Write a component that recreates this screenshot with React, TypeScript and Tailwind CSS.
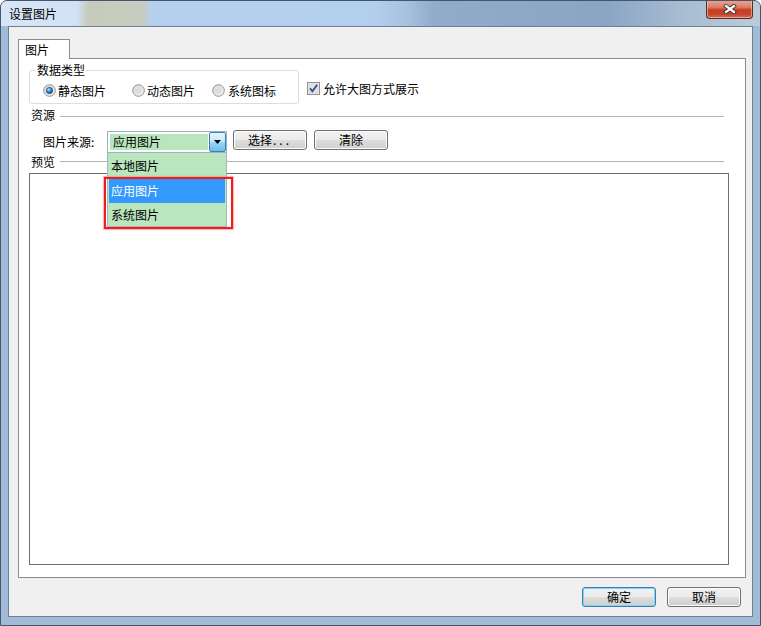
import React from "react";

function Radio({ checked }: { checked?: boolean }) {
  return (
    <svg width="13" height="13" viewBox="0 0 13 13" className="shrink-0">
      <defs>
        <linearGradient id={checked ? "rg1" : "rg0"} x1="0" y1="0" x2="1" y2="1">
          <stop offset="0" stopColor="#d8d8d8" />
          <stop offset="1" stopColor="#f8f8f8" />
        </linearGradient>
        <radialGradient id="dot" cx="0.4" cy="0.35" r="0.7">
          <stop offset="0" stopColor="#b9ecff" />
          <stop offset="0.5" stopColor="#2a8bd2" />
          <stop offset="1" stopColor="#0d3c74" />
        </radialGradient>
      </defs>
      <circle cx="6.5" cy="6.5" r="5.8" fill={checked ? "url(#rg1)" : "url(#rg0)"} stroke="#8e8f8f" strokeWidth="1" />
      {checked ? (
        <circle cx="6.5" cy="6.5" r="3.2" fill="url(#dot)" stroke="#1b4b7e" strokeWidth="0.6" />
      ) : (
        <circle cx="6.5" cy="6.5" r="3.6" fill="#dedede" />
      )}
    </svg>
  );
}

function Checkbox() {
  return (
    <svg width="13" height="13" viewBox="0 0 13 13" className="shrink-0">
      <rect x="0.5" y="0.5" width="12" height="12" fill="#f4f4f4" stroke="#8e8f8f" />
      <rect x="2" y="2" width="9" height="9" fill="#e4e4e4" stroke="#c4c4c4" strokeWidth="0.6" />
      <path d="M3 6.3 L5.4 9.2 L10.2 2.8" fill="none" stroke="#2e4a9c" strokeWidth="1.8" />
    </svg>
  );
}

function Btn({ children, def }: { children: React.ReactNode; def?: boolean }) {
  return (
    <div
      className={
        "w-[74px] h-[20px] rounded-[3px] border flex items-center justify-center bg-[linear-gradient(180deg,#f2f2f2_0%,#ebebeb_48%,#dddddd_52%,#cfcfcf_100%)] " +
        (def
          ? "border-[#3c7fb1] shadow-[inset_0_0_0_1px_#7fd3f7]"
          : "border-[#707070] shadow-[inset_0_0_0_1px_#fcfcfc]")
      }
    >
      {children}
    </div>
  );
}

export default function App() {
  return (
    <div className="w-[761px] h-[626px] relative overflow-hidden border border-[#43566c] rounded-t-[7px] bg-[#a1bad6] flex flex-col font-['Noto_Sans_CJK_SC','Noto_Sans',sans-serif] text-[12px] leading-[12px] text-black">
      {/* title bar */}
      <div className="h-[25px] shrink-0 flex items-center pl-[8px] bg-[linear-gradient(90deg,#d7e6f7_0%,#d2e1f3_10%,#c6cbbc_11.5%,#c7ccbe_18.5%,#b5d0ef_20%,#b3cfee_49%,#a9c3e0_53%,#91accb_57%,#8aa5c4_80%,#a8bdd2_90%,#bccbd9_100%)]">
        <span className="text-[12px] leading-[12px] text-black">设置图片</span>
      </div>
      {/* close button */}
      <div className="absolute top-[-1px] right-[7px] w-[47px] h-[19px] rounded-b-[4px] border border-[#5e2a22] border-t-0 bg-[linear-gradient(180deg,#e9a796_0%,#dc7d67_40%,#c63e24_55%,#c4452c_80%,#d7735c_100%)] flex items-center justify-center shadow-[inset_0_0_0_1px_rgba(255,220,210,0.5)]">
        <svg width="14" height="10" viewBox="0 0 14 10">
          <path d="M3 2 L11 8 M11 2 L3 8" stroke="#3a3030" strokeWidth="4" strokeLinecap="square" />
          <path d="M3 2 L11 8 M11 2 L3 8" stroke="#ffffff" strokeWidth="2.2" strokeLinecap="square" />
        </svg>
      </div>

      <div className="flex px-[7px]">
        {/* client */}
        <div className="w-[745px] h-[591px] border border-[#6d8097] bg-[#f0f0f0] flex flex-col">
          <div className="pt-[12px] pl-[9px] flex flex-col">
            {/* tab */}
            <div className="relative z-10 w-[52px] h-[20px] border border-b-0 border-[#898c95] bg-white mb-[-1px] flex items-center pl-[6px]">
              <span className="mt-[1px]">图片</span>
            </div>
            {/* panel */}
            <div className="w-[728px] h-[520px] border border-[#898c95] bg-white flex flex-col">
              {/* row 1 */}
              <div className="flex items-start pt-[11px] pl-[10px]">
                <div className="relative w-[270px] h-[34px] border border-[#d5dfe5] rounded-[3px] pl-[13px] pt-[13px] flex items-start">
                  <span className="absolute top-[-7px] left-[6px] px-[1px] bg-white">数据类型</span>
                  <div className="w-[89px] h-[13px] flex items-center gap-[2px]">
                    <Radio checked />
                    <span>静态图片</span>
                  </div>
                  <div className="w-[80px] h-[13px] flex items-center gap-[2px]">
                    <Radio />
                    <span>动态图片</span>
                  </div>
                  <div className="h-[13px] flex items-center gap-[3px]">
                    <Radio />
                    <span>系统图标</span>
                  </div>
                </div>
                <div className="ml-[8px] mt-[12px] h-[13px] flex items-center gap-[3px]">
                  <Checkbox />
                  <span>允许大图方式展示</span>
                </div>
              </div>
              {/* 资源 */}
              <div className="mt-[4px] h-[14px] flex items-center">
                <span className="ml-[12px]">资源</span>
                <div className="ml-[5px] mr-[21px] flex-1 h-px bg-[#b4b4b4] mt-[2px]" />
              </div>
              {/* 图片来源 */}
              <div className="mt-[9px] flex items-start">
                <div className="ml-[24px] w-[64px] h-[22px] flex items-center">图片来源:</div>
                <div className="relative z-20 w-[120px] h-[22px] border border-[#9ab3c9] bg-white flex">
                  <div className="flex-1 m-[1px] mr-0 bg-[#b9e6bd] border border-white flex items-center pl-[3px]">
                    应用图片
                  </div>
                  <div className="w-[17px] h-full border border-[#3c7fb1] rounded-[2px] bg-[linear-gradient(180deg,#e6f5fc_0%,#c4e6f8_50%,#9dd5f2_52%,#6cbce8_100%)] flex items-center justify-center">
                    <svg width="7" height="4" viewBox="0 0 7 4">
                      <polygon points="0,0 7,0 3.5,4" fill="#000" />
                    </svg>
                  </div>
                  {/* dropdown list */}
                  <div className="absolute left-[-1px] top-[21px] w-[120px] border border-t-0 border-[#a6b3c0] bg-[#b9e6bd] flex flex-col">
                    <div className="h-[26px] flex items-center pl-[3px]">本地图片</div>
                    <div className="h-[24px] mx-[1px] flex items-center pl-[2px] bg-[#3399ff] text-white">应用图片</div>
                    <div className="h-[23px] flex items-center pl-[3px]">系统图片</div>
                    <div className="absolute left-[-4px] top-[24px] w-[129px] h-[52px] border-2 border-[#ee1c1c] shadow-[0_0_1px_1px_rgba(255,120,120,0.5)]" />
                  </div>
                </div>
                <div className="ml-[6px] -mt-[1px]">
                  <Btn>
                    选择<span className="tracking-[3px] ml-[1px]">...</span>
                  </Btn>
                </div>
                <div className="ml-[7px] -mt-[1px]">
                  <Btn>清除</Btn>
                </div>
              </div>
              {/* 预览 */}
              <div className="mt-[2px] h-[14px] flex items-center">
                <span className="ml-[12px]">预览</span>
                <div className="ml-[5px] mr-[21px] flex-1 h-px bg-[#b4b4b4] -mt-[2px]" />
              </div>
              <div className="mt-[4px] ml-[10px] w-[700px] h-[392px] border border-[#6e6e6e] bg-white" />
            </div>
          </div>
          {/* bottom buttons */}
          <div className="mt-[9px] flex justify-end pr-[11px] gap-[11px]">
            <Btn def>确定</Btn>
            <Btn>取消</Btn>
          </div>
        </div>
      </div>
    </div>
  );
}
